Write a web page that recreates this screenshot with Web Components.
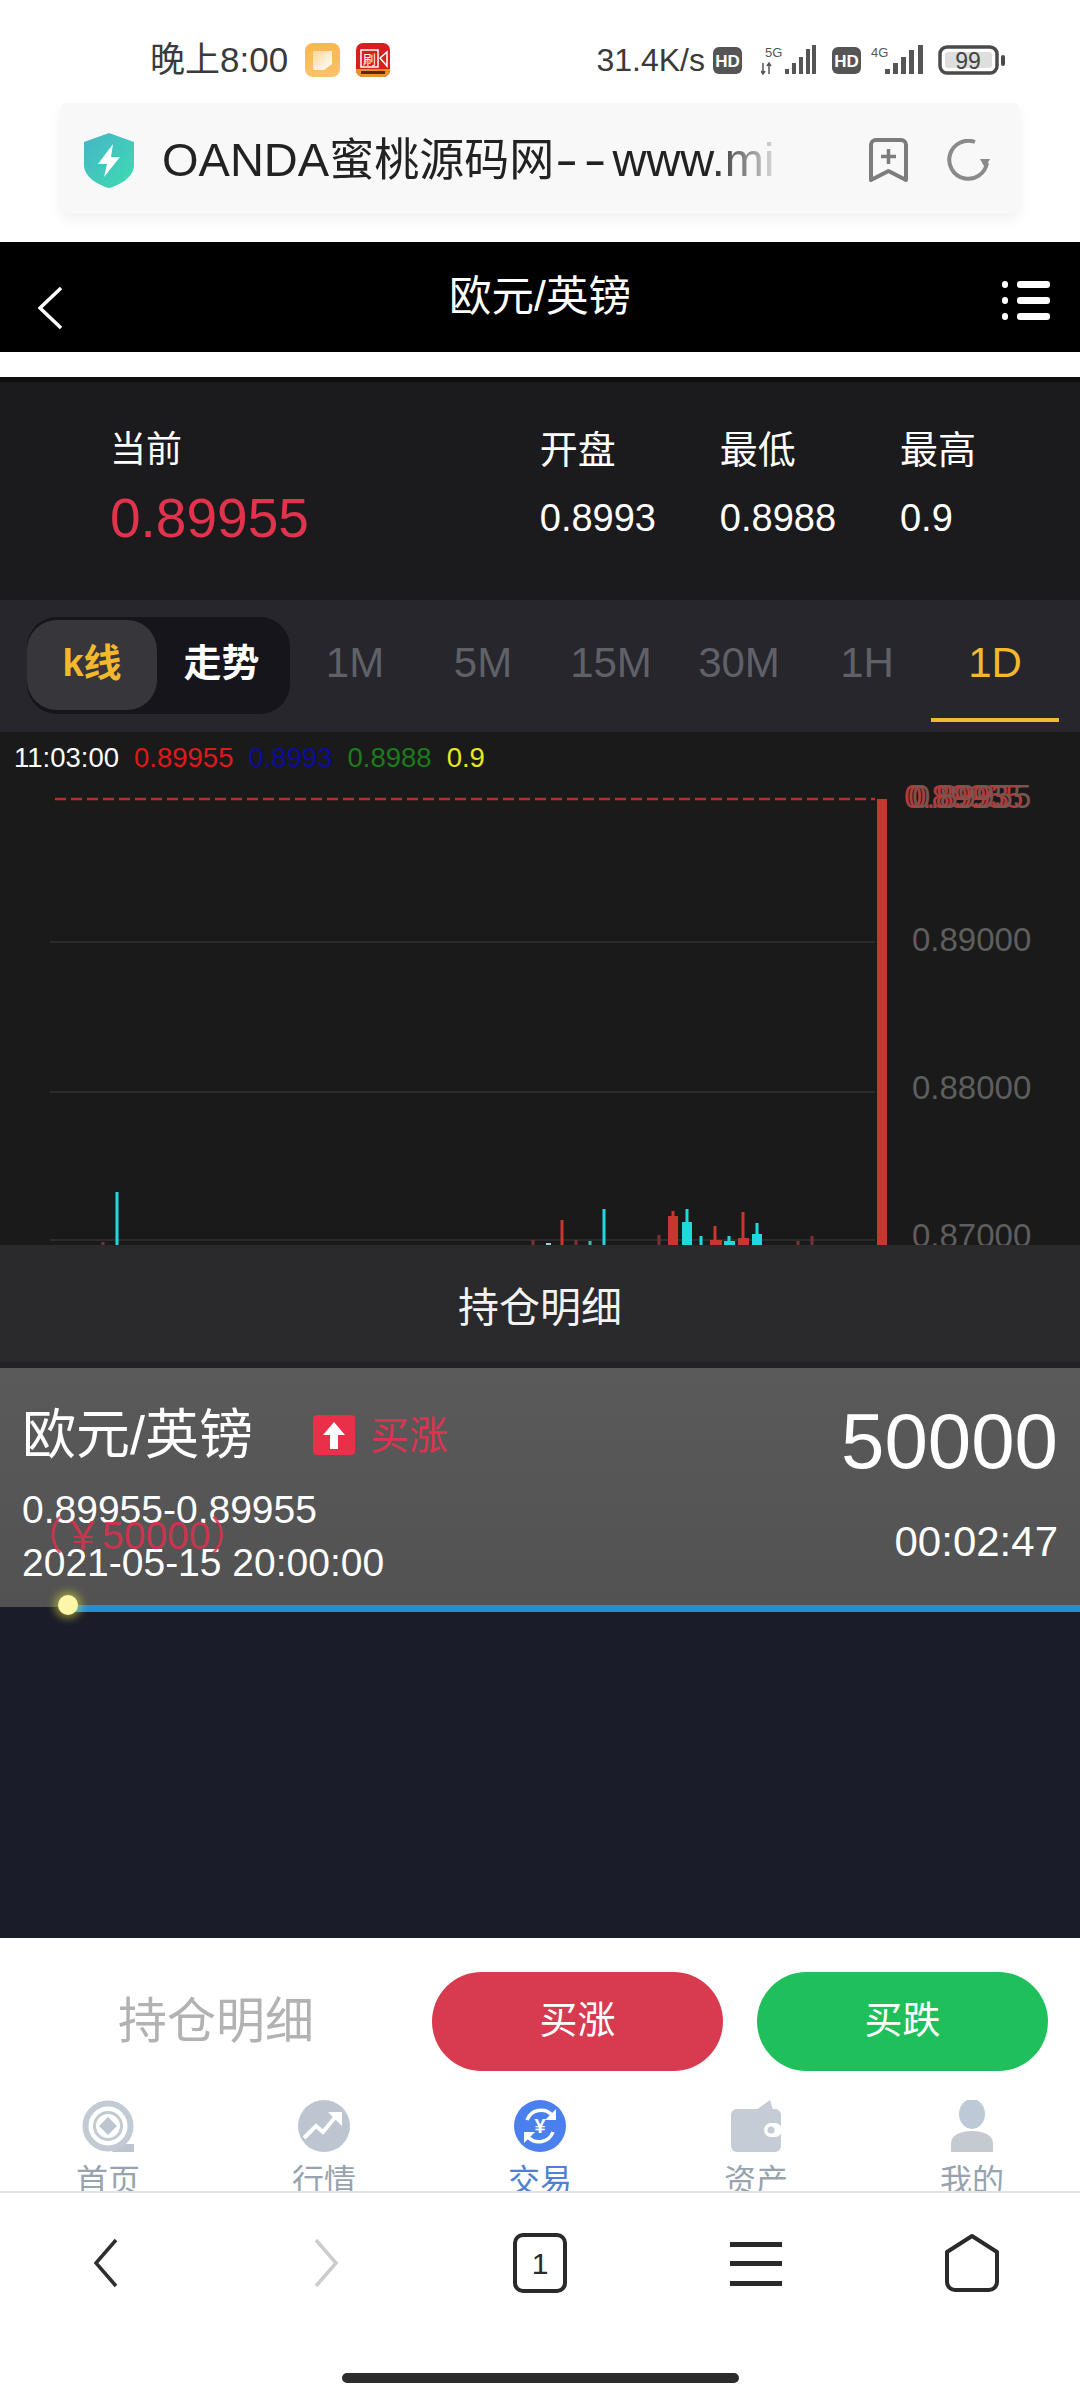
<!DOCTYPE html>
<html lang="zh">
<head>
<meta charset="utf-8">
<title>欧元/英镑</title>
<style>
  html, body { margin: 0; padding: 0; background: #fff; }
  body {
    width: 1080px;
    height: 2400px;
    overflow: hidden;
    display: flex;
    flex-direction: column;
    font-family: "Liberation Sans", "Noto Sans CJK SC", sans-serif;
  }
</style>
</head>
<body>
  <status-bar></status-bar>
  <url-bar>OANDA<span style="font-size:45px">蜜桃源码网</span><span style="display:inline-block;letter-spacing:4px;margin:0 9px 0 10px;transform:scaleX(1.45)">--</span>www.mi</url-bar>
  <nav-header>欧元/英镑</nav-header>

  <quote-panel>
    <quote-stat label="当前" main>0.89955</quote-stat>
    <quote-stat label="开盘">0.8993</quote-stat>
    <quote-stat label="最低">0.8988</quote-stat>
    <quote-stat label="最高">0.9</quote-stat>
  </quote-panel>

  <period-tabs>
    <period-tab>1M</period-tab>
    <period-tab>5M</period-tab>
    <period-tab>15M</period-tab>
    <period-tab>30M</period-tab>
    <period-tab>1H</period-tab>
    <period-tab active>1D</period-tab>
  </period-tabs>

  <kline-chart></kline-chart>
  <section-title>持仓明细</section-title>
  <position-card></position-card>
  <empty-list></empty-list>
  <trade-bar></trade-bar>

  <tab-bar>
    <bottom-tab label="首页">
      <svg viewBox="0 0 52 52" width="52" height="52">
        <path d="M36 44h14a2 2 0 0 1 0 8H30z" fill="#bcc5d0"/>
        <circle cx="26" cy="26" r="22.5" fill="none" stroke="#c2cad4" stroke-width="6"/>
        <circle cx="26" cy="26" r="13.5" fill="none" stroke="#c2cad4" stroke-width="3"/>
        <path d="M26 17l9 9-9 9-9-9z" fill="#bcc5d0"/>
      </svg>
    </bottom-tab>
    <bottom-tab label="行情">
      <svg viewBox="0 0 52 52" width="52" height="52">
        <circle cx="26" cy="26" r="26" fill="#bcc5d0"/>
        <path d="M6 38l12-12 7 6 14-17" fill="none" stroke="#fff" stroke-width="4"/>
        <path d="M30 12h14v14z" fill="#fff"/>
      </svg>
    </bottom-tab>
    <bottom-tab label="交易" active>
      <svg viewBox="0 0 52 52" width="52" height="52">
        <circle cx="26" cy="26" r="26" fill="#4a80ee"/>
        <path d="M13 20A15 15 0 0 1 38 15" fill="none" stroke="#fff" stroke-width="3.5"/>
        <path d="M39 32A15 15 0 0 1 14 37" fill="none" stroke="#fff" stroke-width="3.5"/>
        <path d="M42 9v11H31zM10 43V32h11z" fill="#fff"/>
        <text x="26" y="33" text-anchor="middle" font-size="20" font-weight="700" fill="#fff">¥</text>
      </svg>
    </bottom-tab>
    <bottom-tab label="资产">
      <svg viewBox="0 0 52 52" width="52" height="52">
        <path d="M26 10L40 0l3 10z" fill="#c5ccd5"/>
        <rect x="1" y="9" width="50" height="43" rx="6" fill="#c5ccd5"/>
        <rect x="34" y="23" width="18" height="14" rx="7" fill="#fff"/>
        <circle cx="41" cy="30" r="3.5" fill="#c5ccd5"/>
      </svg>
    </bottom-tab>
    <bottom-tab label="我的">
      <svg viewBox="0 0 52 52" width="52" height="52">
        <ellipse cx="26" cy="14" rx="13" ry="15" fill="#bdc9d6"/>
        <path d="M5 52V43C5 35 15 31 26 31s21 4 21 12v9z" fill="#c5cad0"/>
      </svg>
    </bottom-tab>
  </tab-bar>

  <browser-nav></browser-nav>

<script>
const tpl = (html) => {
  const t = document.createElement("template");
  t.innerHTML = html;
  return t;
};

class Shell extends HTMLElement {
  constructor() {
    super();
    this.attachShadow({ mode: "open" });
    this.shadowRoot.appendChild(this.constructor.tmpl.content.cloneNode(true));
  }
}

const hdIcon = `
  <svg width="29" height="27" viewBox="0 0 29 27">
    <rect width="29" height="27" rx="6" fill="#555"/>
    <text x="14.5" y="20" text-anchor="middle" font-size="17" font-weight="700" fill="#fff">HD</text>
  </svg>`;

class StatusBar extends Shell {
  static tmpl = tpl(`
  <style>
    :host { display: flex; align-items: flex-start; height: 103px; box-sizing: border-box; padding: 43px 75px 0 150px; color: #3a3a3a; background: #fff; }
    .row { display: flex; align-items: center; height: 34px; }
    .time { font-size: 35px; line-height: 34px; }
    .speed { font-size: 32px; margin-left: auto; }
    svg { display: block; flex: none; }
  </style>
  <div class="row"><span class="time">晚上8:00</span>
    <svg style="margin-left:17px" width="35" height="34" viewBox="0 0 35 34">
      <defs><linearGradient id="o" x1="0" y1="0" x2="0" y2="1"><stop offset="0" stop-color="#f9b64c"/><stop offset="1" stop-color="#fbc36c"/></linearGradient>
      <linearGradient id="w" x1="0" y1="0" x2="1" y2="1"><stop offset="0" stop-color="#fbd79b"/><stop offset="1" stop-color="#fff"/></linearGradient></defs>
      <rect width="35" height="34" rx="8" fill="url(#o)"/>
      <path d="M8 8h19v13l-8 6H8z" fill="url(#w)"/>
    </svg>
    <svg style="margin-left:16px" width="34" height="34" viewBox="0 0 34 34">
      <rect width="34" height="34" rx="7" fill="#d81e1e"/>
      <path d="M0 26h34v1a7 7 0 0 1-7 7H7a7 7 0 0 1-7-7z" fill="#e8922b"/>
      <rect x="5" y="7" width="17" height="17" fill="none" stroke="#fff" stroke-width="1.5"/>
      <text x="13.5" y="21" text-anchor="middle" font-size="13" fill="#fff">刷</text>
      <path d="M24 15l7-6v14z" fill="none" stroke="#fff" stroke-width="1.5"/>
      <rect x="5" y="28" width="24" height="3" fill="#5a2a10"/>
    </svg>
  </div>
  <div class="row speed">31.4K/s</div>
  <div class="row">
    <span style="margin-left:8px">${hdIcon}</span>
    <svg style="margin-left:19px" width="55" height="30" viewBox="0 0 55 30">
      <text x="4" y="12" font-size="13" fill="#555">5G</text>
      <path d="M2 18v11M0 26l2 3 2-3M8 29V18M6 21l2-3 2 3" fill="none" stroke="#555" stroke-width="1.5"/>
      <path d="M24 29v-5h4v5zM31 29v-11h4v11zM38 29v-17h4v17zM45 29V4h4v25zM51 29V0h4v29z" fill="#555"/>
    </svg>
    <span style="margin-left:16px">${hdIcon}</span>
    <svg style="margin-left:8px" width="54" height="30" viewBox="0 0 54 30">
      <text x="2" y="12" font-size="13" fill="#555">4G</text>
      <path d="M16 29v-5h5v5zM24 29v-11h5v11zM32 29v-17h5v17zM40 29V5h5v24zM49 29V0h5v29z" fill="#555"/>
    </svg>
    <svg style="margin-left:15px" width="67" height="30" viewBox="0 0 67 30">
      <rect x="2" y="2" width="57" height="26" rx="7" fill="none" stroke="#4a4a4a" stroke-width="3.5"/>
      <rect x="7" y="7" width="47" height="16" rx="3" fill="#dedede"/>
      <text x="30" y="24" text-anchor="middle" font-size="23" fill="#444">99</text>
      <rect x="63" y="10" width="4" height="11" rx="2" fill="#4a4a4a"/>
    </svg>
  </div>`);
}

class UrlBar extends Shell {
  static tmpl = tpl(`
  <style>
    :host { display: block; height: 139px; box-sizing: border-box; padding: 0 60px; background: #fff; }
    .bar { display: flex; align-items: center; height: 110px; box-sizing: border-box; padding: 4px 0 0 24px; background: #f8f8f8; border-radius: 8px; box-shadow: 0 6px 14px rgba(0,0,0,.06); }
    .text { width: 623px; margin-left: 28px; font-size: 47px; line-height: 60px; color: #222; white-space: nowrap; overflow: hidden;
      -webkit-mask-image: linear-gradient(90deg, #000 88%, transparent 100%); mask-image: linear-gradient(90deg, #000 88%, transparent 100%); }
    svg { display: block; flex: none; }
  </style>
  <div class="bar">
    <svg width="50" height="55" viewBox="0 0 50 55">
      <defs><linearGradient id="s" x1="0" y1="0" x2="1" y2="1"><stop offset="0" stop-color="#48b4c8"/><stop offset="1" stop-color="#3cdcb0"/></linearGradient></defs>
      <path d="M25 0l25 9v23c0 12-14 20-25 23C14 52 0 44 0 32V9z" fill="url(#s)"/>
      <path d="M29 11L14 31h9l-3 13 16-20h-9z" fill="#fff"/>
    </svg>
    <div class="text"><slot></slot></div>
    <svg style="margin-left:84px" width="39" height="45" viewBox="0 0 39 45">
      <path d="M2 7a5 5 0 0 1 5-5h25a5 5 0 0 1 5 5v35L19.5 33 2 42z" fill="none" stroke="#7c7c7c" stroke-width="4" stroke-linejoin="round"/>
      <path d="M19.5 11v15M12 18.500h15" stroke="#7c7c7c" stroke-width="3.500"/>
    </svg>
    <svg style="margin-left:39px" width="43" height="42" viewBox="0 0 43 42">
      <path d="M28 3A19 19 0 1 0 40 24" fill="none" stroke="#8a8a8a" stroke-width="4"/>
      <path d="M33 20h10l-5 9z" fill="#8a8a8a"/>
    </svg>
  </div>`);
}

class NavHeader extends Shell {
  static tmpl = tpl(`
  <style>
    :host { display: flex; align-items: center; justify-content: space-between; height: 110px; padding: 0 30px 0 38px; background: #000; color: #fff; position: relative; }
    .title { position: absolute; left: 0; right: 0; top: 30px; text-align: center; font-size: 42.5px; line-height: 50px; }
    svg { display: block; }
  </style>
  <svg style="margin-top:21px" width="24" height="42" viewBox="0 0 24 42"><path d="M23 1L2 21l21 20" fill="none" stroke="#fff" stroke-width="3.500"/></svg>
  <div class="title"><slot></slot></div>
  <svg style="margin-top:5px" width="48" height="40" viewBox="0 0 48 40" fill="#fff">
    <rect y="1" width="6" height="7" rx="3"/><rect x="15" y="1" width="33" height="7" rx="3"/>
    <rect y="17" width="6" height="7" rx="3"/><rect x="15" y="17" width="33" height="7" rx="3"/>
    <rect y="33" width="6" height="7" rx="3"/><rect x="15" y="33" width="33" height="7" rx="3"/>
  </svg>`);
}

class QuotePanel extends Shell {
  static tmpl = tpl(`
  <style>
    :host { display: flex; margin-top: 25px; height: 223px; box-sizing: border-box; padding: 43px 0 0 110px; background: #1b1b1d; border-top: 5px solid #0e0e0e; color: #fff; }
    ::slotted(quote-stat[main]) { width: 432px; }
  </style>
  <slot></slot>`);
}

class QuoteStat extends Shell {
  static tmpl = tpl(`
  <style>
    :host { display: block; width: 181px; }
    .label { font-size: 38px; line-height: 50px; color: #fff; }
    .value { font-size: 38px; line-height: 87px; color: #fff; }
    :host([main]) .label { font-size: 36px; }
    :host([main]) .value { font-size: 55px; color: #e2334d; }
  </style>
  <div class="label"></div>
  <div class="value"><slot></slot></div>`);
  connectedCallback() {
    this.shadowRoot.querySelector(".label").textContent = this.getAttribute("label");
  }
}

class PeriodTabs extends Shell {
  static tmpl = tpl(`
  <style>
    :host { display: flex; align-items: flex-start; height: 132px; box-sizing: border-box; padding-left: 27px; background: #26262c; }
    .switch { display: flex; width: 263px; height: 97px; margin-top: 17px; margin-right: 1px; background: #15151b; border-radius: 30px; font-size: 38px; font-weight: 700; line-height: 92px; box-sizing: border-box; }
    .on { width: 130px; height: 90px; margin-top: 3px; line-height: 86px; text-align: center; color: #f2b92c; background: #36363b; border-radius: 30px; box-sizing: border-box; }
    .off { flex: 1; text-align: center; color: #fff; line-height: 92px; padding-right: 4px; }
    .tabs { display: grid; grid-template-columns: repeat(6, 128px); }
  </style>
  <div class="switch"><div class="on">k线</div><div class="off">走势</div></div>
  <div class="tabs"><slot></slot></div>`);
}

class PeriodTab extends Shell {
  static tmpl = tpl(`
  <style>
    :host { display: flex; align-items: center; justify-content: center; height: 122px; box-sizing: border-box; padding-top: 8px; border-bottom: 4px solid transparent; font-size: 42px; color: #606167; }
    :host([active]) { color: #f0b92f; border-bottom-color: #f0b92f; }
  </style>
  <slot></slot>`);
}

class KlineChart extends Shell {
  static tmpl = tpl(`
  <style>
    :host { display: block; position: relative; height: 513px; overflow: hidden; background: #1a1a1a; }
    svg { position: absolute; left: 0; top: 0; }
    .legend { position: relative; display: flex; gap: 15px; padding-left: 14px; font-size: 27.500px; line-height: 52px; }
  </style>
  <svg width="1080" height="513" viewBox="0 732 1080 513" font-size="33"></svg>
  <div class="legend">
    <span style="color:#fff">11:03:00</span>
    <span style="color:#e01818">0.89955</span>
    <span style="color:#0c0c9c">0.8993</span>
    <span style="color:#1c7c1c">0.8988</span>
    <span style="color:#e8e820">0.9</span>
  </div>`);

  connectedCallback() {
    const red = "#c8372f", dim = "#7a3230", cyan = "#22d8e0", teal = "#4cb8b0";
    // x, wick top, body left, body right, body top, colour
    const candles = [
      [103, 1242, 0, 0, 0, dim], [117, 1192, 0, 0, 0, cyan], [533, 1240, 0, 0, 0, dim],
      [562, 1220, 0, 0, 0, red], [576, 1240, 0, 0, 0, dim], [590, 1241, 0, 0, 0, teal],
      [604, 1209, 0, 0, 0, cyan], [659, 1235, 0, 0, 0, dim], [673, 1211, 668, 678, 1216, red],
      [687, 1209, 682, 692, 1222, cyan], [701, 1236, 0, 0, 0, cyan], [715, 1226, 710, 722, 1240, red],
      [729, 1236, 724, 735, 1241, cyan], [743, 1212, 738, 749, 1238, red], [757, 1223, 752, 762, 1234, cyan],
      [798, 1241, 0, 0, 0, dim], [812, 1236, 0, 0, 0, dim],
    ];
    let out = "";
    for (const y of [942, 1092, 1240]) {
      out += `<rect x="50" y="${y - 1}" width="825" height="2" fill="#2c2c2c"/>`;
    }
    out += `<rect x="546" y="1243" width="5" height="2" fill="#8fd8d8"/>`;
    for (const [x, top, l, r, bodyTop, c] of candles) {
      out += `<rect x="${x - 1.5}" y="${top}" width="3" height="${1245 - top}" fill="${c}"/>`;
      if (r) out += `<rect x="${l}" y="${bodyTop}" width="${r - l}" height="${1245 - bodyTop}" fill="${c}"/>`;
    }
    out += `<path d="M55 799H875" stroke="#b23232" stroke-width="2.500" stroke-dasharray="11 5"/>`;
    out += `<rect x="877" y="799" width="10" height="446" fill="${red}"/>`;
    out += `<text x="904" y="808" fill="#b53a3a">0.89955</text>`;
    out += `<text x="908" y="808" fill="#a8403c">0.8993</text>`;
    out += `<text x="912" y="808" fill="#7a5450">0.89955</text>`;
    out += `<text x="912" y="951" fill="#5e5e5e">0.89000</text>`;
    out += `<text x="912" y="1099" fill="#5e5e5e">0.88000</text>`;
    out += `<text x="912" y="1247" fill="#5e5e5e">0.87000</text>`;
    this.shadowRoot.querySelector("svg").innerHTML = out;
  }
}

class SectionTitle extends Shell {
  static tmpl = tpl(`
  <style>
    :host { display: flex; align-items: center; justify-content: center; height: 123px; box-sizing: border-box; background: #2a2a2c; border-bottom: 6px solid #222224; color: #f2f2f2; font-size: 41px; }
  </style>
  <slot></slot>`);
}

class PositionCard extends Shell {
  static tmpl = tpl(`
  <style>
    :host { display: flex; justify-content: space-between; position: relative; height: 239px; box-sizing: border-box; padding: 33px 22px 0 22px; background: linear-gradient(#5a5a5a, #525252); color: #fff; z-index: 1; }
    .left { position: relative; }
    .head { display: flex; align-items: center; height: 60px; margin-top: 1px; }
    .name { font-size: 54px; line-height: 60px; margin-top: 6px; }
    .badge { width: 42px; height: 40px; margin-left: 60px; flex: none; margin-top: 6px; }
    .dir { font-size: 39px; color: #dc3450; margin-left: 15px; }
    .line { font-size: 39px; line-height: 53px; }
    .lines { margin-top: 21px; }
    .cost { position: absolute; left: 2px; top: 113px; font-size: 39px; line-height: 44px; color: rgba(222, 48, 78, .85); white-space: nowrap; }
    .right { text-align: right; }
    .amount { font-size: 78px; line-height: 80px; }
    .timer { font-size: 42px; line-height: 50px; margin-top: 36px; }
    .bar { position: absolute; left: 75px; right: 0; bottom: -5px; height: 7px; background: #1f8fdc; }
    .knob { position: absolute; left: 58px; bottom: -8px; width: 20px; height: 20px; border-radius: 50%; background: #fdf6a8; box-shadow: 0 0 8px 3px rgba(230, 230, 60, .55); }
  </style>
  <div class="left">
    <div class="head">
      <span class="name">欧元/英镑</span>
      <svg class="badge" viewBox="0 0 42 40"><rect width="42" height="40" rx="4" fill="#ea3049"/><path d="M21 7l11 13h-7v14h-8V20h-7z" fill="#fff"/></svg>
      <span class="dir">买涨</span>
    </div>
    <div class="lines">
      <div class="line">0.89955-0.89955</div>
      <div class="line">2021-05-15 20:00:00</div>
    </div>
    <div class="cost">（￥50000）</div>
  </div>
  <div class="right">
    <div class="amount">50000</div>
    <div class="timer">00:02:47</div>
  </div>
  <div class="bar"></div>
  <div class="knob"></div>`);
}

class EmptyList extends Shell {
  static tmpl = tpl(`<style>:host { display: block; height: 331px; background: #1b1c2a; }</style>`);
}

class TradeBar extends Shell {
  static tmpl = tpl(`
  <style>
    :host { display: flex; align-items: flex-start; height: 152px; box-sizing: border-box; padding: 34px 0 0 118px; background: #fff; }
    .label { width: 314px; font-size: 49px; line-height: 99px; color: #b2b2b2; }
    .btn { width: 291px; height: 99px; border-radius: 50px; text-align: center; font-size: 38px; line-height: 97px; color: #fff; }
    .up { background: #d83b4f; margin-right: 34px; }
    .down { background: #1fc05c; }
  </style>
  <div class="label">持仓明细</div>
  <div class="btn up">买涨</div>
  <div class="btn down">买跌</div>`);
}

class TabBar extends Shell {
  static tmpl = tpl(`
  <style>
    :host { display: grid; grid-template-columns: repeat(5, 216px); height: 103px; box-sizing: border-box; overflow: hidden; background: #fff; border-bottom: 2px solid #dfe2e6; }
  </style>
  <slot></slot>`);
}

class BottomTab extends Shell {
  static tmpl = tpl(`
  <style>
    :host { display: flex; flex-direction: column; align-items: center; padding-top: 10px; color: #98a3af; }
    :host([active]) { color: #5080d2; }
    ::slotted(svg) { display: block; }
    .label { font-size: 32px; line-height: 40px; margin-top: 9px; white-space: nowrap; }
  </style>
  <slot></slot>
  <div class="label"></div>`);
  connectedCallback() {
    this.shadowRoot.querySelector(".label").textContent = this.getAttribute("label");
  }
}

class BrowserNav extends Shell {
  static tmpl = tpl(`
  <style>
    :host { display: block; height: 207px; background: #fff; }
    .row { display: grid; grid-template-columns: repeat(5, 216px); justify-items: center; padding-top: 35px; }
    svg { display: block; }
    .pill { width: 397px; height: 10px; margin: 75px auto 0; border-radius: 5px; background: #2c2c2c; }
  </style>
  <div class="row">
    <svg width="70" height="70" viewBox="0 0 70 70"><path d="M43 13L23 36l20 23" transform="translate(0 -1)" fill="none" stroke="#2e2e2e" stroke-width="3.500"/></svg>
    <svg width="70" height="70" viewBox="0 0 70 70"><path d="M27 13l20 23-20 23" transform="translate(0 -1)" fill="none" stroke="#cccccc" stroke-width="3.500"/></svg>
    <svg width="70" height="70" viewBox="0 0 70 70">
      <rect x="10" y="7" width="50" height="56" rx="8" fill="none" stroke="#2a2a2a" stroke-width="4"/>
      <text x="35" y="46" text-anchor="middle" font-size="30" fill="#2a2a2a">1</text>
    </svg>
    <svg width="70" height="70" viewBox="0 0 70 70" fill="#2a2a2a">
      <rect x="9" y="14" width="52" height="5"/><rect x="9" y="33" width="52" height="5"/><rect x="9" y="53" width="52" height="5"/>
    </svg>
    <svg width="70" height="70" viewBox="0 0 70 70">
      <path d="M35 9L60 25V55a8 8 0 0 1-8 8H18a8 8 0 0 1-8-8V25z" transform="translate(0 -1)" fill="none" stroke="#2a2a2a" stroke-width="4" stroke-linejoin="round"/>
    </svg>
  </div>
  <div class="pill"></div>`);
}

customElements.define("status-bar", StatusBar);
customElements.define("url-bar", UrlBar);
customElements.define("nav-header", NavHeader);
customElements.define("quote-panel", QuotePanel);
customElements.define("quote-stat", QuoteStat);
customElements.define("period-tabs", PeriodTabs);
customElements.define("period-tab", PeriodTab);
customElements.define("kline-chart", KlineChart);
customElements.define("section-title", SectionTitle);
customElements.define("position-card", PositionCard);
customElements.define("empty-list", EmptyList);
customElements.define("trade-bar", TradeBar);
customElements.define("tab-bar", TabBar);
customElements.define("bottom-tab", BottomTab);
customElements.define("browser-nav", BrowserNav);
</script>
</body>
</html>
